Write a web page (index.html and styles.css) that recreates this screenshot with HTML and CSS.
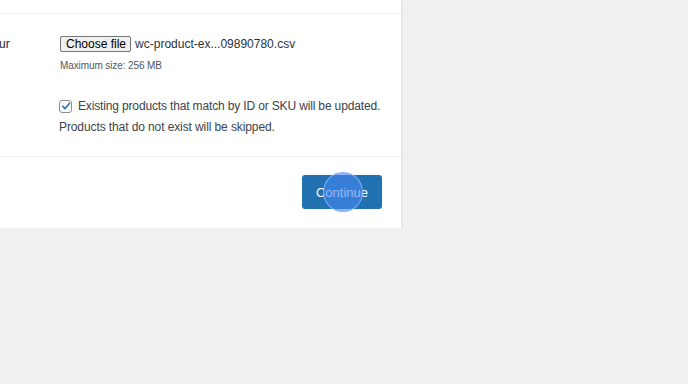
FILE: index.html
```html
<!DOCTYPE html>
<html>
<head>
<meta charset="utf-8">
<link rel="stylesheet" href="styles.css">
</head>
<body>
<div class="card">
  <div class="card-top"></div>
  <div class="form">
    <div class="row">
      <div class="label">ur</div>
      <div class="field">
        <div class="file">
          <span class="file-btn">Choose file</span>
          <span class="file-name">wc-product-ex...09890780.csv</span>
        </div>
        <div class="hint">Maximum size: 256 MB</div>
      </div>
    </div>
    <div class="row row-check">
      <div class="label"></div>
      <div class="field">
        <label class="check">
          <span class="box"><svg width="10" height="10" viewBox="0 0 10 10"><path d="M1.6 5.2 L4 7.6 L8.6 2.2" fill="none" stroke="#2271b1" stroke-width="1.6" stroke-linecap="round" stroke-linejoin="round"/></svg></span>
          <span>Existing products that match by ID or SKU will be updated.</span>
        </label>
        <div class="check-note">Products that do not exist will be skipped.</div>
      </div>
    </div>
  </div>
  <div class="actions">
    <span class="button">Continue<span class="click"></span></span>
  </div>
</div>
</body>
</html>
```
FILE: styles.css
```css
html, body {
  margin: 0;
  padding: 0;
  background: #f0f0f1;
  font-family: "Liberation Sans", Arial, sans-serif;
  color: #3c434a;
}
.card {
  width: 402px;
  background: #fff;
  box-shadow: 0 1px 2px rgba(0,0,0,0.08);
  border-right: 1px solid #e4e4e6;
  box-sizing: border-box;
}
.card-top {
  height: 13px;
  border-bottom: 1px solid #f0f0f1;
}
.form {
  padding-top: 22px;
  padding-bottom: 21px;
}
.row {
  display: flex;
}
.label {
  width: 59px;
  font-size: 12px;
  color: #1d2327;
  line-height: 16px;
  text-indent: -1px;
}
.field {
  flex: 1;
}
.file {
  display: flex;
  align-items: center;
  gap: 4px;
  height: 16px;
  padding-left: 1px;
}
.file-btn {
  font-size: 12px;
  color: #000;
  background: #efefef;
  border: 1px solid #767676;
  border-radius: 2px;
  padding: 0 4px 0 5px;
  height: 16px;
  box-sizing: border-box;
  display: inline-flex;
  align-items: center;
}
.file-name {
  font-size: 12px;
  color: #2c3338;
}
.hint {
  font-size: 10px;
  line-height: 12px;
  color: #50575e;
  margin-top: 8px;
  padding-left: 1px;
  letter-spacing: -0.1px;
}
.row-check {
  margin-top: 26px;
}
.check {
  display: flex;
  align-items: center;
  gap: 6px;
  font-size: 12px;
  line-height: 16px;
  color: #3c434a;
  letter-spacing: -0.15px;
}
.box {
  width: 13px;
  height: 13px;
  box-sizing: border-box;
  border: 1px solid #8c8f94;
  border-radius: 3px;
  display: inline-flex;
  align-items: center;
  justify-content: center;
}
.check-note {
  font-size: 12px;
  line-height: 16px;
  color: #3c434a;
  margin-top: 5px;
  letter-spacing: -0.1px;
}
.actions {
  border-top: 1px solid #f0f0f1;
  padding: 18px 19px 19px 0;
  display: flex;
  justify-content: flex-end;
}
.button {
  position: relative;
  width: 80px;
  height: 34px;
  background: #2271b1;
  border-radius: 3px;
  color: #fff;
  font-size: 13px;
  display: flex;
  align-items: center;
  justify-content: center;
}
.click {
  position: absolute;
  left: 21px;
  top: -3px;
  width: 40px;
  height: 40px;
  box-sizing: border-box;
  border-radius: 50%;
  background: rgba(70,135,240,0.6);
  border: 1.5px solid rgba(130,175,250,0.95);
}
```
